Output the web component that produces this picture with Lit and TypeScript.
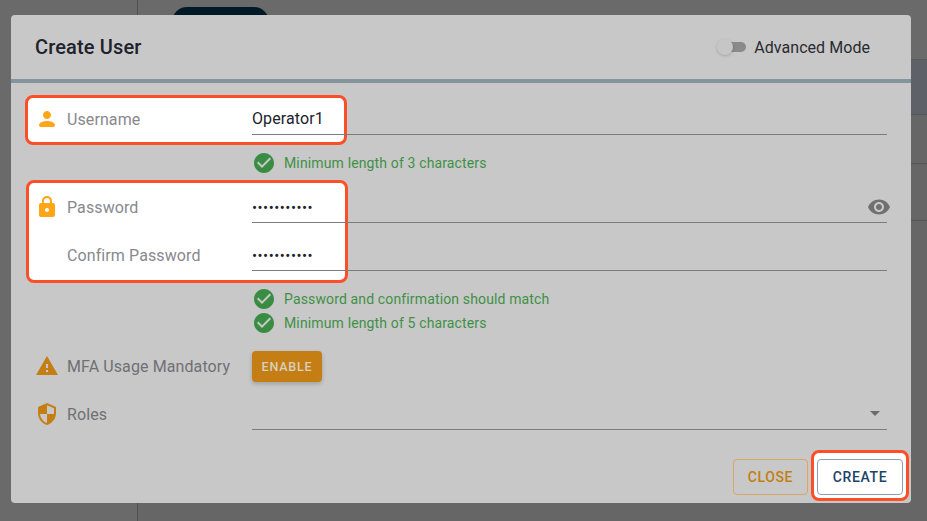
import { LitElement, css, html, svg } from 'lit'
import { customElement } from 'lit/decorators.js'

const icons = {
  person: 'M12 12c2.21 0 4-1.79 4-4s-1.79-4-4-4-4 1.79-4 4 1.79 4 4 4zm0 2c-2.67 0-8 1.34-8 4 0 1.1.9 2 2 2h12c1.1 0 2-.9 2-2 0-2.66-5.33-4-8-4z',
  lock: 'M18 8h-1V6c0-2.76-2.24-5-5-5S7 3.24 7 6v2H6c-1.1 0-2 .9-2 2v10c0 1.1.9 2 2 2h12c1.1 0 2-.9 2-2V10c0-1.1-.9-2-2-2zm-6 9c-1.1 0-2-.9-2-2s.9-2 2-2 2 .9 2 2-.9 2-2 2zm3.1-9H8.9V6c0-1.71 1.39-3.1 3.1-3.1 1.71 0 3.1 1.39 3.1 3.1v2z',
  warning: 'M1 21h22L12 2 1 21zm12-3h-2v-2h2v2zm0-4h-2v-4h2v4z',
  shield: 'M12 1L3 5v6c0 5.55 3.84 10.74 9 12 5.16-1.26 9-6.45 9-12V5l-9-4zm0 10.99h7c-.53 4.12-3.28 7.79-7 8.94V12H5V6.3l7-3.11v8.8z',
  check: 'M12 2C6.48 2 2 6.48 2 12s4.48 10 10 10 10-4.48 10-10S17.52 2 12 2zm-2 15l-5-5 1.41-1.41L10 14.17l7.59-7.59L19 8l-9 9z',
  eye: 'M12 4.5C7 4.5 2.73 7.61 1 12c1.73 4.39 6 7.5 11 7.5s9.27-3.11 11-7.5c-1.73-4.39-6-7.5-11-7.5zM12 17c-2.76 0-5-2.24-5-5s2.24-5 5-5 5 2.24 5 5-2.24 5-5 5zm0-8c-1.66 0-3 1.34-3 3s1.34 3 3 3 3-1.34 3-3-1.34-3-3-3z',
}

const icon = (d: string, cls = '') => html`<svg class="icon ${cls}" viewBox="0 0 24 24">${svg`<path d=${d}></path>`}</svg>`

@customElement('app-root')
export class AppRoot extends LitElement {
  static styles = css`
    :host {
      display: block;
      position: relative;
      width: 927px;
      height: 521px;
      overflow: hidden;
      background: #666;
      font-family: Roboto, sans-serif;
    }

    /* page behind the scrim */
    .page {
      display: flex;
      height: 100%;
    }
    .side {
      width: 137px;
      background: #6a6a6a;
      border-right: 1px solid #505050;
    }
    .main {
      flex: 1;
      display: flex;
      flex-direction: column;
    }
    .top {
      height: 60px;
      padding: 7px 0 0 34px;
      box-sizing: border-box;
      border-bottom: 1px solid #5a5a5a;
      background: #6a6a6a;
    }
    .pill {
      width: 97px;
      height: 30px;
      border-radius: 15px;
      background: #001a26;
    }
    .band {
      height: 54px;
      background: #5e6168;
      border-bottom: 1px solid #555;
    }
    .line {
      height: 48px;
      border-bottom: 1px solid #555;
    }
    .line.tall {
      height: 56px;
    }

    /* dialog */
    .dialog {
      position: absolute;
      left: 11px;
      top: 15px;
      width: 900px;
      height: 488px;
      border-radius: 4px;
      background: #c8c8c8;
      display: flex;
      flex-direction: column;
    }
    .head {
      box-sizing: border-box;
      height: 68px;
      border-bottom: 4px solid #84949c;
      padding: 0 41px 0 24px;
      display: flex;
      align-items: center;
      justify-content: space-between;
    }
    .title {
      font-size: 20px;
      font-weight: 500;
      letter-spacing: 0.15px;
      color: #20222c;
    }
    .mode {
      display: flex;
      align-items: center;
      gap: 8px;
      font-size: 16px;
      letter-spacing: 0.05px;
      color: #2a2a30;
    }
    .toggle {
      position: relative;
      width: 26px;
      height: 10px;
      border-radius: 5px;
      background: #8a8a8a;
    }
    .thumb {
      position: absolute;
      left: -3px;
      top: -3px;
      width: 16px;
      height: 16px;
      border-radius: 50%;
      background: #c6c6c6;
      box-shadow: 0 1px 3px rgba(0, 0, 0, 0.18);
    }

    .body {
      flex: 1;
      padding: 4px 24px 0;
    }
    .row {
      position: relative;
      display: grid;
      grid-template-columns: 24px 177px 1fr;
      column-gap: 8px;
      height: 48px;
      box-sizing: border-box;
      padding-top: 18px;
      align-items: center;
      font-size: 16px;
      letter-spacing: 0.1px;
      color: #707074;
    }
    .row.hot {
      color: #88888e;
    }
    .row.hot > * {
      position: relative;
    }
    /* labels and icons sit a pixel above the centre of the field */
    .row > span,
    .row > .icon {
      margin-bottom: 2px;
    }
    .spot {
      position: absolute !important;
      width: 322px;
      background: #fff;
      border: 3px solid #fb4f28;
      border-radius: 8px;
      box-sizing: border-box;
    }
    .spot.user {
      left: -10px;
      top: 8px;
      height: 50px;
    }
    .spot.pass {
      left: -9px;
      top: 5px;
      height: 103px;
    }
    .icon {
      display: block;
      width: 24px;
      height: 24px;
      fill: currentColor;
    }
    .orange {
      color: #ffa517;
    }
    .amber {
      color: #c47e13;
    }
    .flip {
      transform: scaleX(-1);
    }
    .field {
      align-self: stretch;
      display: flex;
      align-items: center;
      justify-content: space-between;
      border-bottom: 1px solid #7c7c7c;
      color: #20222c;
      box-sizing: border-box;
      height: 30px;
      padding-bottom: 2px;
    }
    .eye {
      color: #707070;
      margin-right: -4px;
    }
    .dots {
      font-size: 15px;
      letter-spacing: 0.5px;
      margin-top: 2px;
    }
    .hints {
      padding: 16px 0 0 219px;
    }
    .hint {
      display: flex;
      align-items: center;
      height: 24px;
      gap: 8px;
      font-size: 14px;
      letter-spacing: 0.14px;
      color: #3f9046;
    }
    .hint .icon {
      margin-left: -2px;
      color: #3b8c43;
    }
    .hints.tight {
      margin-bottom: -1px;
    }
    .enable {
      justify-self: start;
      width: 70px;
      height: 31px;
      margin-top: -1px;
      border: 0;
      border-radius: 4px;
      padding: 0;
      background: #c47e13;
      color: #d8d0c0;
      font: 500 12.5px Roboto, sans-serif;
      letter-spacing: 0.8px;
      box-shadow: 0 2px 4px rgba(0, 0, 0, 0.2);
    }
    .caret {
      width: 0;
      height: 0;
      border-left: 5px solid transparent;
      border-right: 5px solid transparent;
      border-top: 5px solid #6c6c6c;
      margin-right: 7px;
    }

    .foot {
      display: flex;
      justify-content: flex-end;
      gap: 9px;
      padding: 0 8px 8px 0;
      isolation: isolate;
    }
    .btn {
      height: 36px;
      box-sizing: border-box;
      border-radius: 4px;
      font: 500 14px Roboto, sans-serif;
      letter-spacing: 0.6px;
      padding: 0;
    }
    .close {
      width: 75px;
      background: transparent;
      border: 1px solid #d8a763;
      color: #c47e13;
    }
    .create {
      position: relative;
      width: 86px;
      background: #fff;
      border: 1px solid #8d9eb0;
      color: #1c4466;
    }
    .ring {
      position: absolute;
      z-index: -1;
      left: -7px;
      top: -10px;
      width: 98px;
      height: 51px;
      box-sizing: border-box;
      background: #fff;
      border: 3px solid #fb4f28;
      border-radius: 8px;
    }
  `

  render() {
    return html`
      <div class="page">
        <div class="side"></div>
        <div class="main">
          <div class="top"><div class="pill"></div></div>
          <div class="band"></div>
          <div class="line"></div>
          <div class="line tall"></div>
        </div>
      </div>
      <div class="dialog">
        <div class="head">
          <div class="title">Create User</div>
          <div class="mode">
            <div class="toggle"><div class="thumb"></div></div>
            Advanced Mode
          </div>
        </div>
        <div class="body">
          <div class="row hot">
            <div class="spot user"></div>
            ${icon(icons.person, 'orange')}
            <span>Username</span>
            <div class="field">Operator1</div>
          </div>
          <div class="hints">
            <div class="hint">${icon(icons.check)}Minimum length of 3 characters</div>
          </div>
          <div class="row hot">
            <div class="spot pass"></div>
            ${icon(icons.lock, 'orange')}
            <span>Password</span>
            <div class="field"><span class="dots">•••••••••••</span>${icon(icons.eye, 'eye')}</div>
          </div>
          <div class="row hot">
            <span></span>
            <span>Confirm Password</span>
            <div class="field"><span class="dots">•••••••••••</span></div>
          </div>
          <div class="hints tight">
            <div class="hint">${icon(icons.check)}Password and confirmation should match</div>
            <div class="hint">${icon(icons.check)}Minimum length of 5 characters</div>
          </div>
          <div class="row">
            ${icon(icons.warning, 'amber')}
            <span>MFA Usage Mandatory</span>
            <button class="enable">ENABLE</button>
          </div>
          <div class="row">
            ${icon(icons.shield, 'amber flip')}
            <span>Roles</span>
            <div class="field"><span></span><div class="caret"></div></div>
          </div>
        </div>
        <div class="foot">
          <button class="btn close">CLOSE</button>
          <button class="btn create"><div class="ring"></div>CREATE</button>
        </div>
      </div>
    `
  }
}
